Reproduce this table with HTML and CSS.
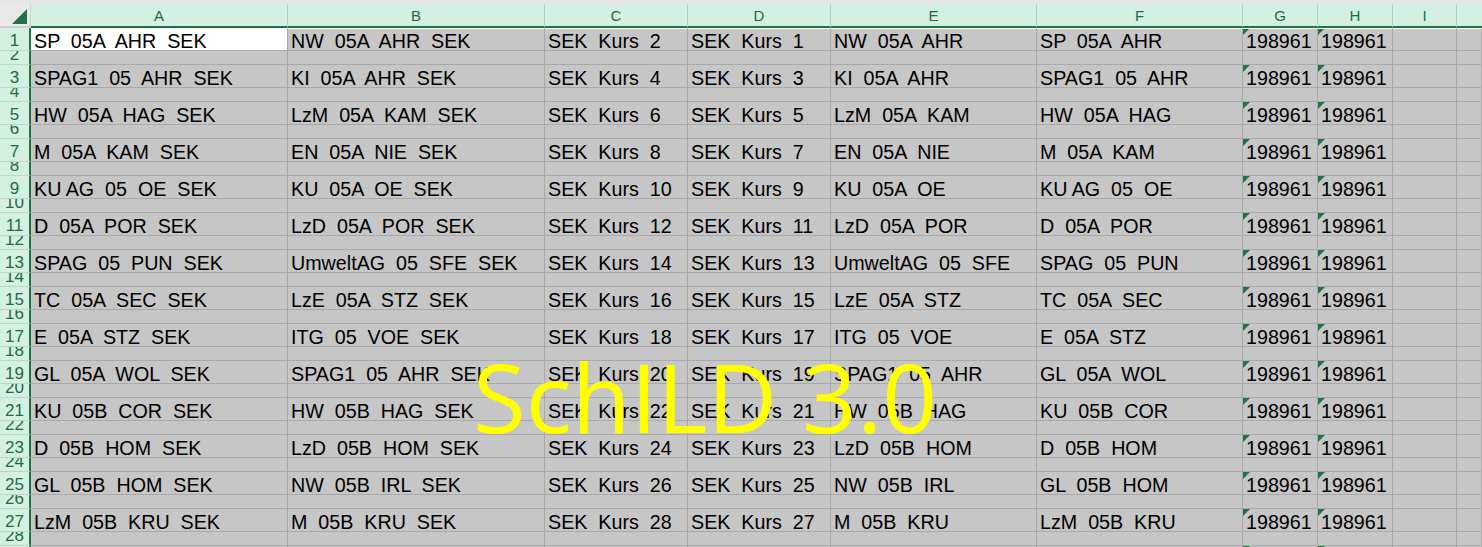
FILE: index.html
```html
<!DOCTYPE html>
<html lang="de">
<head>
<meta charset="utf-8">
<title>SchILD 3.0 – Tabelle</title>
<link rel="stylesheet" href="styles.css">
</head>
<body>
<div class="sheet">
  <div class="topbar"></div>
  <div class="row head">
    <div class="corner"><svg width="31" height="22" viewBox="0 0 31 22"><polygon points="12,20 27,20 27,5" fill="#217346"/></svg></div>
    <div class="ch">A</div><div class="ch">B</div><div class="ch">C</div><div class="ch">D</div><div class="ch">E</div><div class="ch">F</div><div class="ch">G</div><div class="ch">H</div><div class="ch">I</div><div class="ch"></div>
  </div>
  <div class="body">
    <div class="row odd first"><div class="rh"><span>1</span></div><div class="c active">SP  05A  AHR  SEK</div><div class="c">NW  05A  AHR  SEK</div><div class="c">SEK  Kurs  2</div><div class="c">SEK  Kurs  1</div><div class="c">NW  05A  AHR</div><div class="c">SP  05A  AHR</div><div class="c n">198961</div><div class="c n">198961</div><div class="c"></div><div class="c"></div></div>
    <div class="row even"><div class="rh"><span>2</span></div><div class="c"></div><div class="c"></div><div class="c"></div><div class="c"></div><div class="c"></div><div class="c"></div><div class="c"></div><div class="c"></div><div class="c"></div><div class="c"></div></div>
    <div class="row odd"><div class="rh"><span>3</span></div><div class="c">SPAG1  05  AHR  SEK</div><div class="c">KI  05A  AHR  SEK</div><div class="c">SEK  Kurs  4</div><div class="c">SEK  Kurs  3</div><div class="c">KI  05A  AHR</div><div class="c">SPAG1  05  AHR</div><div class="c n">198961</div><div class="c n">198961</div><div class="c"></div><div class="c"></div></div>
    <div class="row even"><div class="rh"><span>4</span></div><div class="c"></div><div class="c"></div><div class="c"></div><div class="c"></div><div class="c"></div><div class="c"></div><div class="c"></div><div class="c"></div><div class="c"></div><div class="c"></div></div>
    <div class="row odd"><div class="rh"><span>5</span></div><div class="c">HW  05A  HAG  SEK</div><div class="c">LzM  05A  KAM  SEK</div><div class="c">SEK  Kurs  6</div><div class="c">SEK  Kurs  5</div><div class="c">LzM  05A  KAM</div><div class="c">HW  05A  HAG</div><div class="c n">198961</div><div class="c n">198961</div><div class="c"></div><div class="c"></div></div>
    <div class="row even"><div class="rh"><span>6</span></div><div class="c"></div><div class="c"></div><div class="c"></div><div class="c"></div><div class="c"></div><div class="c"></div><div class="c"></div><div class="c"></div><div class="c"></div><div class="c"></div></div>
    <div class="row odd"><div class="rh"><span>7</span></div><div class="c">M  05A  KAM  SEK</div><div class="c">EN  05A  NIE  SEK</div><div class="c">SEK  Kurs  8</div><div class="c">SEK  Kurs  7</div><div class="c">EN  05A  NIE</div><div class="c">M  05A  KAM</div><div class="c n">198961</div><div class="c n">198961</div><div class="c"></div><div class="c"></div></div>
    <div class="row even"><div class="rh"><span>8</span></div><div class="c"></div><div class="c"></div><div class="c"></div><div class="c"></div><div class="c"></div><div class="c"></div><div class="c"></div><div class="c"></div><div class="c"></div><div class="c"></div></div>
    <div class="row odd"><div class="rh"><span>9</span></div><div class="c">KU AG  05  OE  SEK</div><div class="c">KU  05A  OE  SEK</div><div class="c">SEK  Kurs  10</div><div class="c">SEK  Kurs  9</div><div class="c">KU  05A  OE</div><div class="c">KU AG  05  OE</div><div class="c n">198961</div><div class="c n">198961</div><div class="c"></div><div class="c"></div></div>
    <div class="row even"><div class="rh"><span>10</span></div><div class="c"></div><div class="c"></div><div class="c"></div><div class="c"></div><div class="c"></div><div class="c"></div><div class="c"></div><div class="c"></div><div class="c"></div><div class="c"></div></div>
    <div class="row odd"><div class="rh"><span>11</span></div><div class="c">D  05A  POR  SEK</div><div class="c">LzD  05A  POR  SEK</div><div class="c">SEK  Kurs  12</div><div class="c">SEK  Kurs  11</div><div class="c">LzD  05A  POR</div><div class="c">D  05A  POR</div><div class="c n">198961</div><div class="c n">198961</div><div class="c"></div><div class="c"></div></div>
    <div class="row even"><div class="rh"><span>12</span></div><div class="c"></div><div class="c"></div><div class="c"></div><div class="c"></div><div class="c"></div><div class="c"></div><div class="c"></div><div class="c"></div><div class="c"></div><div class="c"></div></div>
    <div class="row odd"><div class="rh"><span>13</span></div><div class="c">SPAG  05  PUN  SEK</div><div class="c">UmweltAG  05  SFE  SEK</div><div class="c">SEK  Kurs  14</div><div class="c">SEK  Kurs  13</div><div class="c">UmweltAG  05  SFE</div><div class="c">SPAG  05  PUN</div><div class="c n">198961</div><div class="c n">198961</div><div class="c"></div><div class="c"></div></div>
    <div class="row even"><div class="rh"><span>14</span></div><div class="c"></div><div class="c"></div><div class="c"></div><div class="c"></div><div class="c"></div><div class="c"></div><div class="c"></div><div class="c"></div><div class="c"></div><div class="c"></div></div>
    <div class="row odd"><div class="rh"><span>15</span></div><div class="c">TC  05A  SEC  SEK</div><div class="c">LzE  05A  STZ  SEK</div><div class="c">SEK  Kurs  16</div><div class="c">SEK  Kurs  15</div><div class="c">LzE  05A  STZ</div><div class="c">TC  05A  SEC</div><div class="c n">198961</div><div class="c n">198961</div><div class="c"></div><div class="c"></div></div>
    <div class="row even"><div class="rh"><span>16</span></div><div class="c"></div><div class="c"></div><div class="c"></div><div class="c"></div><div class="c"></div><div class="c"></div><div class="c"></div><div class="c"></div><div class="c"></div><div class="c"></div></div>
    <div class="row odd"><div class="rh"><span>17</span></div><div class="c">E  05A  STZ  SEK</div><div class="c">ITG  05  VOE  SEK</div><div class="c">SEK  Kurs  18</div><div class="c">SEK  Kurs  17</div><div class="c">ITG  05  VOE</div><div class="c">E  05A  STZ</div><div class="c n">198961</div><div class="c n">198961</div><div class="c"></div><div class="c"></div></div>
    <div class="row even"><div class="rh"><span>18</span></div><div class="c"></div><div class="c"></div><div class="c"></div><div class="c"></div><div class="c"></div><div class="c"></div><div class="c"></div><div class="c"></div><div class="c"></div><div class="c"></div></div>
    <div class="row odd"><div class="rh"><span>19</span></div><div class="c">GL  05A  WOL  SEK</div><div class="c">SPAG1  05  AHR  SEK</div><div class="c">SEK  Kurs  20</div><div class="c">SEK  Kurs  19</div><div class="c">SPAG1  05  AHR</div><div class="c">GL  05A  WOL</div><div class="c n">198961</div><div class="c n">198961</div><div class="c"></div><div class="c"></div></div>
    <div class="row even"><div class="rh"><span>20</span></div><div class="c"></div><div class="c"></div><div class="c"></div><div class="c"></div><div class="c"></div><div class="c"></div><div class="c"></div><div class="c"></div><div class="c"></div><div class="c"></div></div>
    <div class="row odd"><div class="rh"><span>21</span></div><div class="c">KU  05B  COR  SEK</div><div class="c">HW  05B  HAG  SEK</div><div class="c">SEK  Kurs  22</div><div class="c">SEK  Kurs  21</div><div class="c">HW  05B  HAG</div><div class="c">KU  05B  COR</div><div class="c n">198961</div><div class="c n">198961</div><div class="c"></div><div class="c"></div></div>
    <div class="row even"><div class="rh"><span>22</span></div><div class="c"></div><div class="c"></div><div class="c"></div><div class="c"></div><div class="c"></div><div class="c"></div><div class="c"></div><div class="c"></div><div class="c"></div><div class="c"></div></div>
    <div class="row odd"><div class="rh"><span>23</span></div><div class="c">D  05B  HOM  SEK</div><div class="c">LzD  05B  HOM  SEK</div><div class="c">SEK  Kurs  24</div><div class="c">SEK  Kurs  23</div><div class="c">LzD  05B  HOM</div><div class="c">D  05B  HOM</div><div class="c n">198961</div><div class="c n">198961</div><div class="c"></div><div class="c"></div></div>
    <div class="row even"><div class="rh"><span>24</span></div><div class="c"></div><div class="c"></div><div class="c"></div><div class="c"></div><div class="c"></div><div class="c"></div><div class="c"></div><div class="c"></div><div class="c"></div><div class="c"></div></div>
    <div class="row odd"><div class="rh"><span>25</span></div><div class="c">GL  05B  HOM  SEK</div><div class="c">NW  05B  IRL  SEK</div><div class="c">SEK  Kurs  26</div><div class="c">SEK  Kurs  25</div><div class="c">NW  05B  IRL</div><div class="c">GL  05B  HOM</div><div class="c n">198961</div><div class="c n">198961</div><div class="c"></div><div class="c"></div></div>
    <div class="row even"><div class="rh"><span>26</span></div><div class="c"></div><div class="c"></div><div class="c"></div><div class="c"></div><div class="c"></div><div class="c"></div><div class="c"></div><div class="c"></div><div class="c"></div><div class="c"></div></div>
    <div class="row odd"><div class="rh"><span>27</span></div><div class="c">LzM  05B  KRU  SEK</div><div class="c">M  05B  KRU  SEK</div><div class="c">SEK  Kurs  28</div><div class="c">SEK  Kurs  27</div><div class="c">M  05B  KRU</div><div class="c">LzM  05B  KRU</div><div class="c n">198961</div><div class="c n">198961</div><div class="c"></div><div class="c"></div></div>
    <div class="row even"><div class="rh"><span>28</span></div><div class="c"></div><div class="c"></div><div class="c"></div><div class="c"></div><div class="c"></div><div class="c"></div><div class="c"></div><div class="c"></div><div class="c"></div><div class="c"></div></div>
    <div class="row odd"><div class="rh"><span>29</span></div><div class="c">SP  05B  LIE  SEK</div><div class="c">KR  05B  LIE  SEK</div><div class="c">SEK  Kurs  30</div><div class="c">SEK  Kurs  29</div><div class="c">KR  05B  LIE</div><div class="c">SP  05B  LIE</div><div class="c n">198961</div><div class="c n">198961</div><div class="c"></div><div class="c"></div></div>
  </div>
  <div class="watermark">SchILD 3.0</div>
</div>
</body>
</html>
```
FILE: styles.css
```css
html, body {
  margin: 0;
  padding: 0;
}
body {
  width: 1482px;
  height: 547px;
  overflow: hidden;
  background: #c6c6c6;
  font-family: "Liberation Sans", Arial, sans-serif;
}
.sheet {
  position: relative;
  width: 1482px;
  height: 547px;
  overflow: hidden;
}
.topbar {
  height: 4px;
  background: #e6e6e6;
}
.row {
  display: grid;
  grid-template-columns: 31px 257px 257px 143px 143px 206px 206px 75px 75px 64px 1fr;
}
.head {
  height: 24px;
}
.corner {
  background: #e9e9e9;
  border-bottom: 2px solid #d0d0d0;
  box-sizing: border-box;
  border-right: 1px solid #c9d3cc;
  height: 24px;
}
.corner svg {
  display: block;
}
.ch {
  box-sizing: border-box;
  height: 24px;
  background: #d3f0e0;
  border-right: 1px solid #bccac1;
  border-bottom: 2px solid #217346;
  color: #1f6b47;
  font-size: 15px;
  display: flex;
  align-items: flex-end;
  justify-content: center;
  padding-bottom: 3px;
  line-height: 15px;
}
.ch:last-child {
  border-right: none;
}
.odd {
  height: 23px;
}
.even {
  height: 14px;
}
.rh {
  box-sizing: border-box;
  background: #d3f0e0;
  border-right: 2px solid #217346;
  border-bottom: 1px solid #bdd6c6;
  color: #1f6b47;
  font-size: 17px;
  line-height: 17px;
  display: flex;
  align-items: flex-end;
  justify-content: center;
  overflow: hidden;
  padding-bottom: 1px;
}
.c {
  box-sizing: border-box;
  border-right: 1px solid #a9a9a9;
  border-bottom: 1px solid #a9a9a9;
  padding: 2px 0 0 3px;
  font-size: 19.7px;
  line-height: 22px;
  color: #000;
  white-space: pre;
  overflow: hidden;
  position: relative;
}
.first .c {
  border-top: 1px solid #ffffff;
  padding-top: 1px;
}
.active {
  background: #ffffff;
}
.n::before {
  content: "";
  position: absolute;
  left: 0;
  top: 0;
  border-top: 7px solid #217346;
  border-right: 7px solid transparent;
}
.first .n::before {
  top: -1px;
}
.watermark {
  position: absolute;
  left: 473px;
  top: 348px;
  font-family: "Open Sans", "Noto Sans", sans-serif;
  font-size: 96px;
  line-height: 96px;
  color: #ffff00;
  white-space: nowrap;
  pointer-events: none;
}
```
